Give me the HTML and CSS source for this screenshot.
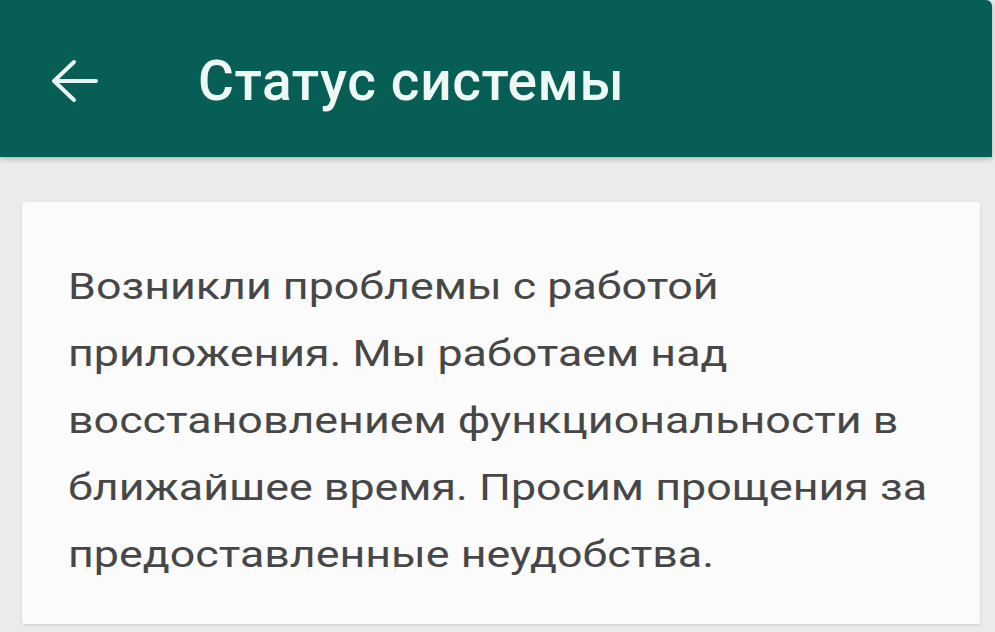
FILE: index.html
```html
<!DOCTYPE html>
<html lang="ru">
<head>
  <meta charset="UTF-8">
  <meta name="viewport" content="width=device-width, initial-scale=1">
  <title>Статус системы</title>
  <link rel="stylesheet" href="styles.css">
</head>
<body>

<div class="toolbar">
  <button class="back" type="button" aria-label="Назад">
    <svg width="48" height="48" viewBox="0 0 48 48">
      <path d="M46 22H8" stroke="#e8f5f2" stroke-width="4" fill="none" stroke-linecap="round"/>
      <path d="M24 3L4 22l20 19" stroke="#e8f5f2" stroke-width="4" fill="none" stroke-linecap="round" stroke-linejoin="round"/>
    </svg>
  </button>
  <h1>Статус системы</h1>
</div>

<div class="content">
  <div class="card">
    <p>Возникли проблемы с работой<br>
    приложения. Мы работаем над<br>
    восстановлением функциональности в<br>
    ближайшее время. Просим прощения за<br>
    предоставленные неудобства.</p>
  </div>
</div>

</body>
</html>
```

FILE: styles.css
```css
html, body {
  margin: 0;
  height: 100%;
}
body {
  font-family: Roboto, "Noto Sans", sans-serif;
  background: #ebebeb;
  color: #474747;
  overflow: hidden;
}
.toolbar {
  height: 157px;
  margin-right: 3px;
  background: #075e55;
  border-top-right-radius: 6px;
  display: flex;
  align-items: center;
  box-shadow: 0 2px 5px rgba(0,0,0,0.25);
  position: relative;
}
.back {
  background: none;
  border: none;
  padding: 0;
  margin-left: 50px;
  margin-top: 8px;
  width: 48px;
  height: 48px;
  cursor: pointer;
}
.toolbar h1 {
  margin: 5px 0 0 100px;
  font-size: 55px;
  font-weight: 500;
  letter-spacing: 0.6px;
  color: #eef8f5;
}
.content {
  padding: 45px 15px 0 22px;
}
.card {
  background: #fbfbfb;
  border-radius: 3px;
  box-shadow: 0 1px 3px rgba(0,0,0,0.12);
  height: 422px;
  box-sizing: border-box;
  padding: 51px 20px 0 46px;
  overflow: hidden;
}
.card p {
  width: 720px;
  margin: 0;
  font-size: 37px;
  line-height: 67px;
  transform: scaleX(1.21);
  transform-origin: left top;
}
```
